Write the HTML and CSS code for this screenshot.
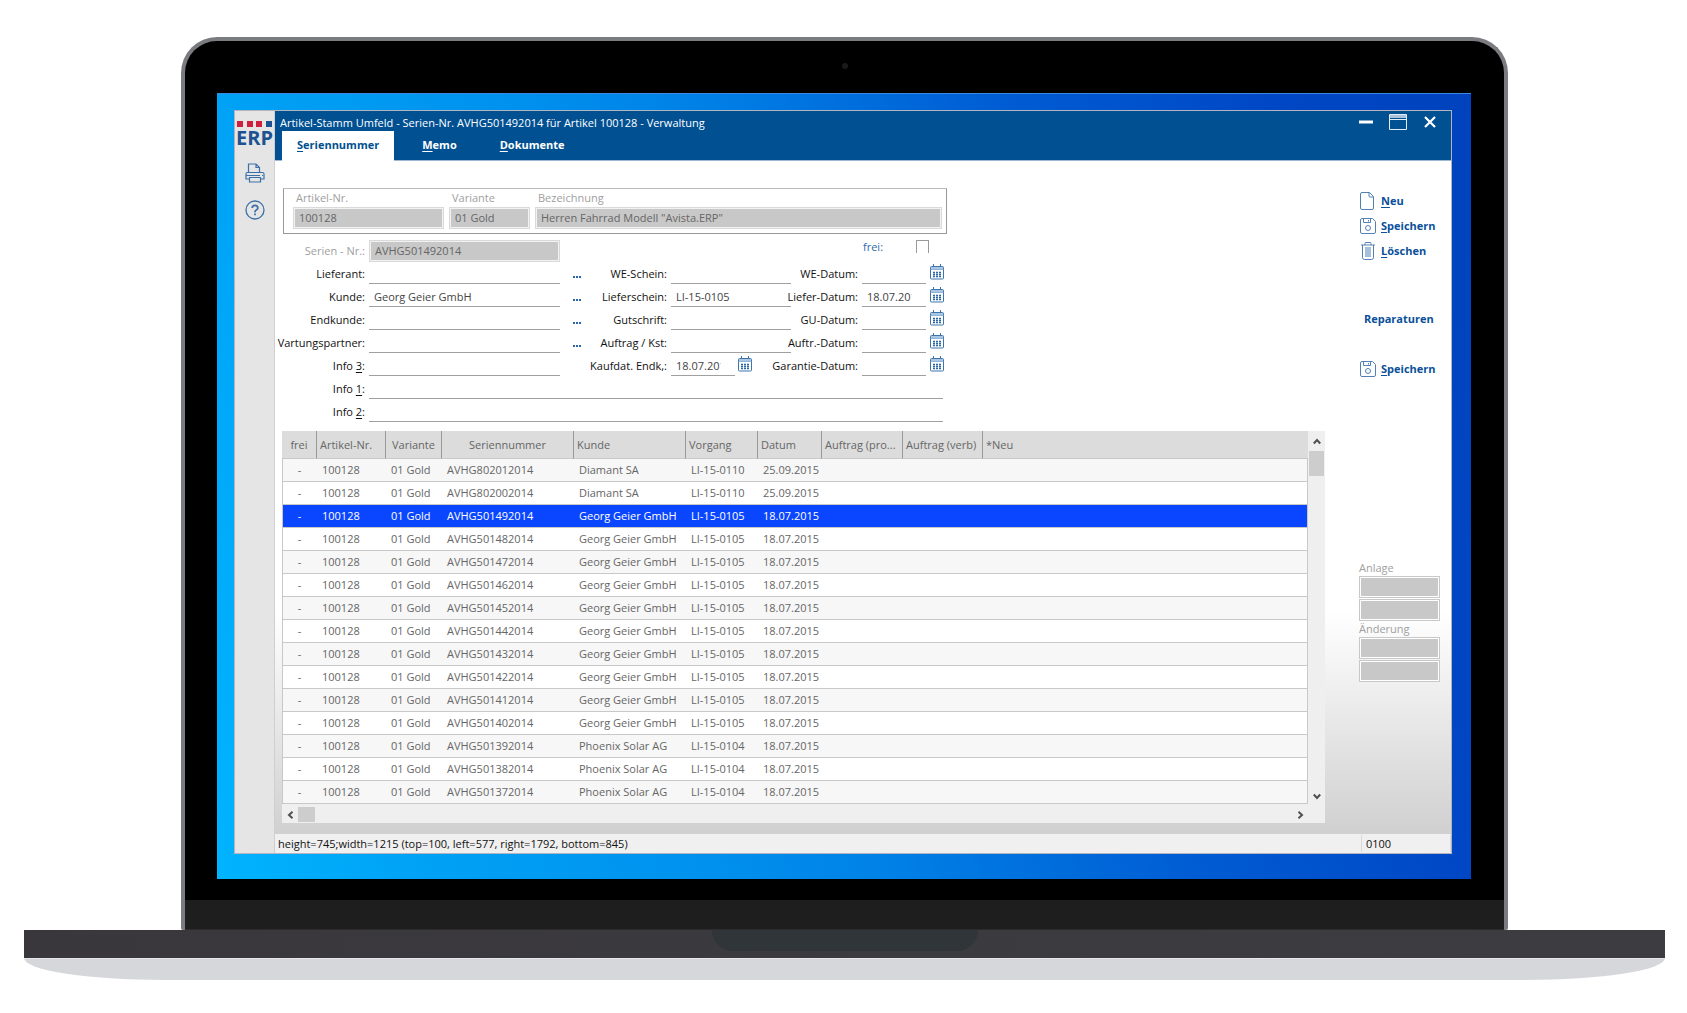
FILE: index.html
```html
<!DOCTYPE html>
<html lang="de">
<head>
<meta charset="utf-8">
<title>Artikel-Stamm Umfeld - Verwaltung</title>
<link rel="stylesheet" href="styles.css">
</head>
<body>
<svg class="defs" aria-hidden="true">
  <symbol id="cal" viewBox="0 0 14 16">
    <path d="M.5 3.500q0-1 1-1h11q1 0 1 1v10.500q0 1-1 1h-11q-1 0-1-1z" fill="#fff" stroke="#3f74ab"/>
    <path d="M1 3h12v2.500H1z" fill="#a9c6e3"/>
    <path d="M.5 5.500h13" stroke="#8fb2d6" fill="none"/>
    <path d="M3.500 0v3M10.500 0v3" stroke="#3f74ab" fill="none"/>
    <path d="M3 8.500h2M6 8.500h2M9 8.500h2M3 10.500h2M6 10.500h2M9 10.500h2M3 12.500h2M6 12.500h2M9 12.500h2" stroke="#2a66a5" stroke-width="1.300" fill="none"/>
  </symbol>
  <symbol id="disk" viewBox="0 0 16 16">
    <path d="M2 .5h10.500l3 3v10.500q0 1.500-1.500 1.500H2Q.5 15.500.5 14V2Q.5.500 2 .5M3.500.5v4h7v-4M8.500 2v1.500" fill="none" stroke="#5380b3"/>
    <circle cx="8" cy="10" r="2.500" fill="none" stroke="#5380b3"/>
  </symbol>
</svg>
<div class="laptop">
  <div class="lid">
    <span class="camera"></span>
    <div class="screen">
      <div class="window">
        <aside class="sidebar">
          <div class="logo">
            <div class="dots"><i></i><i></i><i></i><i class="blue"></i></div>
            <b>ERP</b>
          </div>
          <button class="side-btn" aria-label="Drucken">
            <svg width="20" height="20" viewBox="0 0 20 20" fill="none" stroke="#3d70a9" stroke-width="1.200"><path d="M3.500 10V1H11l3.500 3.500V10M11 1v3.500h3.500M4 16H1V11q0-1.500 1.500-1.500h15Q19 9.500 19 11v5h-3M1 12.500h14M17 12.500h1M4 14.500h12M4.500 14.500V19h11v-4.500"/></svg>
          </button>
          <button class="side-btn" aria-label="Hilfe">
            <svg width="20" height="20" viewBox="0 0 20 20" fill="none" stroke="#3d70a9" stroke-width="1.300"><circle cx="10" cy="10" r="9"/><path d="M7.200 8q0-2.700 2.800-2.700T12.800 8q0 1.200-1.500 2T10 12.300M10 13.500v1.700" stroke-width="1.800"/></svg>
          </button>
        </aside>
        <div class="main">
          <header class="titlebar">
            <div class="title-left">
              <h1>Artikel-Stamm Umfeld - Serien-Nr. AVHG501492014 für Artikel 100128 - Verwaltung</h1>
              <nav class="tabs">
                <button class="tab active"><u>S</u>eriennummer</button>
                <button class="tab"><u>M</u>emo</button>
                <button class="tab"><u>D</u>okumente</button>
              </nav>
            </div>
            <div class="controls">
              <button aria-label="Minimieren"><svg width="18" height="16" viewBox="0 0 18 16"><path d="M2 8h14" stroke="#fff" stroke-width="3"/></svg></button>
              <button aria-label="Maximieren"><svg width="18" height="16" viewBox="0 0 18 16"><path d="M.5.5h17v15H.5z" fill="none" stroke="#e4ecf4"/><path d="M1 1h16v3H1z" fill="#a9c3dc"/><path d="M1 5.500h16" stroke="#e4ecf4"/></svg></button>
              <button aria-label="Schließen"><svg width="18" height="16" viewBox="0 0 18 16"><path d="M4 3l10 10M14 3L4 13" stroke="#fff" stroke-width="2.200"/></svg></button>
            </div>
          </header>
          <div class="content">
            <div class="work">
              <div class="article">
                <div><label for="art">Artikel-Nr.</label><input id="art" class="gray" value="100128" disabled></div>
                <div><label for="var">Variante</label><input id="var" class="gray" value="01 Gold" disabled></div>
                <div><label for="bez">Bezeichnung</label><input id="bez" class="gray" value='Herren Fahrrad Modell "Avista.ERP"' disabled></div>
              </div>
              <form class="form">
                <label class="a dim" for="snr">Serien - Nr.:</label><input id="snr" class="b gray" value="AVHG501492014" disabled>
                <label class="frei" for="frei">frei:</label><input id="frei" class="check" type="checkbox">

                <label class="a" for="lief">Lieferant:</label><input id="lief" class="b line"><button type="button" class="more" aria-label="Lieferant wählen"><i></i><i></i><i></i></button>
                <label class="d" for="we">WE-Schein:</label><input id="we" class="e line">
                <label class="f" for="wed">WE-Datum:</label><input id="wed" class="g line date"><button type="button" class="cal" aria-label="Kalender"><svg><use href="#cal"/></svg></button>

                <label class="a" for="kd">Kunde:</label><input id="kd" class="b line" value="Georg Geier GmbH"><button type="button" class="more" aria-label="Kunde wählen"><i></i><i></i><i></i></button>
                <label class="d" for="ls">Lieferschein:</label><input id="ls" class="e line" value="LI-15-0105">
                <label class="f" for="ld">Liefer-Datum:</label><input id="ld" class="g line date" value="18.07.2015"><button type="button" class="cal" aria-label="Kalender"><svg><use href="#cal"/></svg></button>

                <label class="a" for="ek">Endkunde:</label><input id="ek" class="b line"><button type="button" class="more" aria-label="Endkunde wählen"><i></i><i></i><i></i></button>
                <label class="d" for="gs">Gutschrift:</label><input id="gs" class="e line">
                <label class="f" for="gd">GU-Datum:</label><input id="gd" class="g line date"><button type="button" class="cal" aria-label="Kalender"><svg><use href="#cal"/></svg></button>

                <label class="a" for="wp">Vartungspartner:</label><input id="wp" class="b line"><button type="button" class="more" aria-label="Partner wählen"><i></i><i></i><i></i></button>
                <label class="d" for="ak">Auftrag / Kst:</label><input id="ak" class="e line">
                <label class="f" for="ad">Auftr.-Datum:</label><input id="ad" class="g line date"><button type="button" class="cal" aria-label="Kalender"><svg><use href="#cal"/></svg></button>

                <label class="a" for="i3">Info <u>3</u>:</label><input id="i3" class="b line">
                <label class="d" for="ke">Kaufdat. Endk,:</label>
                <div class="e pair"><input id="ke" class="line date" value="18.07.2015"><button type="button" class="cal" aria-label="Kalender"><svg><use href="#cal"/></svg></button></div>
                <label class="f" for="ga">Garantie-Datum:</label><input id="ga" class="g line date"><button type="button" class="cal" aria-label="Kalender"><svg><use href="#cal"/></svg></button>

                <label class="a" for="i1">Info <u>1</u>:</label><input id="i1" class="wide line">
                <label class="a" for="i2">Info <u>2</u>:</label><input id="i2" class="wide line">
              </form>
              <div class="grid-area">
                <div class="grid-row">
                  <table>
                    <colgroup><col class="c1"><col class="c2"><col class="c3"><col class="c4"><col class="c5"><col class="c6"><col class="c7"><col class="c8"><col class="c9"><col></colgroup>
                    <thead><tr><th>frei</th><th>Artikel-Nr.</th><th>Variante</th><th>Seriennummer</th><th>Kunde</th><th>Vorgang</th><th>Datum</th><th>Auftrag (pro...</th><th>Auftrag (verb)</th><th>*Neu</th></tr></thead>
                    <tbody>
                      <tr><td>-</td><td>100128</td><td>01 Gold</td><td>AVHG802012014</td><td>Diamant SA</td><td>LI-15-0110</td><td>25.09.2015</td><td></td><td></td><td></td></tr>
                      <tr><td>-</td><td>100128</td><td>01 Gold</td><td>AVHG802002014</td><td>Diamant SA</td><td>LI-15-0110</td><td>25.09.2015</td><td></td><td></td><td></td></tr>
                      <tr class="selected"><td>-</td><td>100128</td><td>01 Gold</td><td>AVHG501492014</td><td>Georg Geier GmbH</td><td>LI-15-0105</td><td>18.07.2015</td><td></td><td></td><td></td></tr>
                      <tr><td>-</td><td>100128</td><td>01 Gold</td><td>AVHG501482014</td><td>Georg Geier GmbH</td><td>LI-15-0105</td><td>18.07.2015</td><td></td><td></td><td></td></tr>
                      <tr><td>-</td><td>100128</td><td>01 Gold</td><td>AVHG501472014</td><td>Georg Geier GmbH</td><td>LI-15-0105</td><td>18.07.2015</td><td></td><td></td><td></td></tr>
                      <tr><td>-</td><td>100128</td><td>01 Gold</td><td>AVHG501462014</td><td>Georg Geier GmbH</td><td>LI-15-0105</td><td>18.07.2015</td><td></td><td></td><td></td></tr>
                      <tr><td>-</td><td>100128</td><td>01 Gold</td><td>AVHG501452014</td><td>Georg Geier GmbH</td><td>LI-15-0105</td><td>18.07.2015</td><td></td><td></td><td></td></tr>
                      <tr><td>-</td><td>100128</td><td>01 Gold</td><td>AVHG501442014</td><td>Georg Geier GmbH</td><td>LI-15-0105</td><td>18.07.2015</td><td></td><td></td><td></td></tr>
                      <tr><td>-</td><td>100128</td><td>01 Gold</td><td>AVHG501432014</td><td>Georg Geier GmbH</td><td>LI-15-0105</td><td>18.07.2015</td><td></td><td></td><td></td></tr>
                      <tr><td>-</td><td>100128</td><td>01 Gold</td><td>AVHG501422014</td><td>Georg Geier GmbH</td><td>LI-15-0105</td><td>18.07.2015</td><td></td><td></td><td></td></tr>
                      <tr><td>-</td><td>100128</td><td>01 Gold</td><td>AVHG501412014</td><td>Georg Geier GmbH</td><td>LI-15-0105</td><td>18.07.2015</td><td></td><td></td><td></td></tr>
                      <tr><td>-</td><td>100128</td><td>01 Gold</td><td>AVHG501402014</td><td>Georg Geier GmbH</td><td>LI-15-0105</td><td>18.07.2015</td><td></td><td></td><td></td></tr>
                      <tr><td>-</td><td>100128</td><td>01 Gold</td><td>AVHG501392014</td><td>Phoenix Solar AG</td><td>LI-15-0104</td><td>18.07.2015</td><td></td><td></td><td></td></tr>
                      <tr><td>-</td><td>100128</td><td>01 Gold</td><td>AVHG501382014</td><td>Phoenix Solar AG</td><td>LI-15-0104</td><td>18.07.2015</td><td></td><td></td><td></td></tr>
                      <tr><td>-</td><td>100128</td><td>01 Gold</td><td>AVHG501372014</td><td>Phoenix Solar AG</td><td>LI-15-0104</td><td>18.07.2015</td><td></td><td></td><td></td></tr>
                    </tbody>
                  </table>
                  <div class="vbar">
                    <button aria-label="Nach oben"><svg width="8" height="7" viewBox="0 0 8 7"><path d="M.8 5.500L4 2l3.200 3.500" fill="none" stroke="#505050" stroke-width="2"/></svg></button>
                    <span class="thumb"></span>
                    <button class="end" aria-label="Nach unten"><svg width="8" height="7" viewBox="0 0 8 7"><path d="M.8 1.500L4 5l3.200-3.500" fill="none" stroke="#505050" stroke-width="2"/></svg></button>
                  </div>
                </div>
                <div class="hbar">
                  <button aria-label="Nach links"><svg width="7" height="8" viewBox="0 0 7 8"><path d="M5.500.8L2 4l3.500 3.200" fill="none" stroke="#505050" stroke-width="2"/></svg></button>
                  <span class="thumb"></span>
                  <button class="end" aria-label="Nach rechts"><svg width="7" height="8" viewBox="0 0 7 8"><path d="M1.500.8L5 4 1.500 7.200" fill="none" stroke="#505050" stroke-width="2"/></svg></button>
                </div>
              </div>
            </div>
            <aside class="actions">
              <div class="group">
                <button class="act"><svg class="tall" viewBox="0 0 16 18"><path d="M.5 2Q.5.500 2 .5h7.500l4 4V16q0 1.500-1.500 1.500H2Q.5 17.500.5 16zM9 .5v3.500q0 1 1 1h3.500" fill="none" stroke="#5380b3"/></svg><span><u>N</u>eu</span></button>
                <button class="act"><svg><use href="#disk"/></svg><span><u>S</u>peichern</span></button>
                <button class="act"><svg class="tall" viewBox="0 0 16 18" fill="none" stroke="#5380b3"><path d="M1 3h14M5 3V1.500Q5 .5 6 .5h4q1 0 1 1V3M2.500 3v12.500q0 2 2 2h7q2 0 2-2V3M6 5v10M8 5v10M10 5v10"/></svg><span><u>L</u>öschen</span></button>
              </div>
              <button class="act plain">Reparaturen</button>
              <button class="act"><svg><use href="#disk"/></svg><span><u>S</u>peichern</span></button>
              <div class="audit">
                <label for="an1">Anlage</label>
                <input id="an1" class="gray" disabled><input class="gray" disabled aria-label="Anlage Benutzer">
                <label for="ae1">Änderung</label>
                <input id="ae1" class="gray" disabled><input class="gray" disabled aria-label="Änderung Benutzer">
              </div>
            </aside>
          </div>
          <footer class="status"><span class="info">height=745;width=1215 (top=100, left=577, right=1792, bottom=845)</span><span class="code">0100</span></footer>
        </div>
      </div>
    </div>
    <div class="chin"></div>
  </div>
  <div class="base"><div class="notch"></div></div>
  <div class="foot"></div>
</div>
</body>
</html>
```
FILE: styles.css
```css
* { box-sizing: border-box; }
body { margin: 0; background: #fff; font: 11px/16px "Open Sans", "Noto Sans", sans-serif; color: #111; }
button, input { font: inherit; color: inherit; margin: 0; padding: 0; border: 0; background: none; border-radius: 0; }
button { cursor: pointer; }
svg { display: block; }
u { text-underline-offset: 2px; }
.defs { width: 0; height: 0; position: absolute; }

/* Device */
.laptop { padding: 37px 22px 0 24px; }
.lid { margin: 0 157px; border: 4px solid #7b7c80; border-bottom: 0; border-radius: 36px 36px 2px 2px; background: #000; display: flex; flex-direction: column; }
.camera { align-self: center; width: 6px; height: 6px; margin: 22px 0 24px; border-radius: 50%; background: #1a1a1c; }
.screen { margin: 0 33px 21px 32px; padding: 16px 19px 25px 17px; border-top: 1px solid #3a8ae0; background: linear-gradient(76deg, #00b4ff 0%, #00a2f5 14%, #0092ee 33%, #0080e6 47%, #005dd4 67%, #0047c5 86%, #0042bd 100%); }
.chin { height: 30px; background: #1e1e1e; border-bottom: 1px solid #2c2b2e; }
.base { height: 28px; background: linear-gradient(90deg, #39373c, #3d3d41); display: flex; justify-content: center; }
.notch { width: 266px; height: 21px; background: #2f3539; border-radius: 0 0 21px 21px; }
.foot { height: 22px; background: #d6d7db; border-top: 1px solid #e6e6ea; border-radius: 0 0 140px 140px / 0 0 22px 22px; }

/* Window */
.window { display: flex; border: 1px solid #b4b4bf; background: #fff; }
.sidebar { flex: none; width: 40px; background: #e5e5e5; border-right: 1px solid #cfcfcf; display: flex; flex-direction: column; align-items: center; }
.logo { margin: 10px 0 3px; color: #1d5291; }
.logo b { display: block; font: 700 20px/22px "Open Sans", sans-serif; }
.dots { display: flex; justify-content: space-between; padding: 0 1px; }
.dots i { width: 6px; height: 6px; background: #d01f3c; }
.dots .blue { background: #1d5291; }
.side-btn { margin: 11px 0 6px; }
.main { flex: 1; min-width: 0; display: flex; flex-direction: column; }
.titlebar { height: 50px; background: #005092; border-bottom: 1px solid #9db8d2; color: #fff; display: flex; justify-content: space-between; }
.title-left { display: flex; flex-direction: column; padding-left: 5px; }
h1 { margin: 4px 0 0; font-size: 11px; font-weight: 400; line-height: 16px; white-space: nowrap; }
.tabs { display: flex; gap: 13px; padding-left: 2px; }
.tab { height: 30px; padding: 0 15px 2px; font-weight: 700; }
.active { background: #fff; color: #005092; }
.controls { display: flex; align-items: flex-start; gap: 14px; padding: 3px 12px 0 0; }

.content { flex: 1; display: flex; background: linear-gradient(#fff 67%, #d0d0d0 100%); }
.work { flex: 1; min-width: 0; padding: 27px 0 11px; }
.article { width: 664px; height: 46px; margin-left: 8px; padding: 1px 4px 0 9px; border: 1px solid #999; border-top-color: #bbb; background: #fff; display: grid; grid-template-columns: 151px 81px 1fr; gap: 5px; color: #a0a0a0; }
.article label { display: block; padding: 0 0 1px 3px; }
.article input { width: 100%; }
.gray { height: 22px; background: #c8c8c8; border: 1px solid #d9d9d9; box-shadow: inset 0 0 0 1px #f2f2f2; padding: 0 5px 1px; color: #666; }

.form { display: grid; grid-template-columns: 90px 191px 28px 71px 120px 63px 64px 13px; grid-auto-rows: 23px; column-gap: 4px; align-items: center; margin-top: 5px; }
.form label { white-space: nowrap; justify-self: end; }
.form input { width: 100%; min-width: 0; }
.a { grid-column: 1; }
.b { grid-column: 2; }
.more { grid-column: 3; display: flex; gap: 1px; padding: 7px 9px 0; }
.more i { width: 2px; height: 2px; background: #2a66a5; }
.d { grid-column: 4; }
.e { grid-column: 5; }
.f { grid-column: 6; }
.g { grid-column: 7; }
.wide { grid-column: 2 / -1; }
.line { height: 21px; border-bottom: 1px solid #a0a0a0; padding: 0 5px; color: #444; }
.form .date { width: 64px; padding-right: 14px; }
.pair { display: flex; gap: 3px; align-items: center; }
.cal svg { width: 14px; height: 16px; margin-bottom: 3px; }
.form .dim { color: #a0a0a0; }
.form .frei { grid-column: 7; justify-self: start; color: #2f6aa8; padding: 0 1px 8px; }
.form .check { grid-column: 7 / -1; justify-self: end; appearance: none; width: 13px; height: 13px; margin: 0 14px 8px 0; border: 1px solid #999; border-bottom: 0; }
.form .frei, .form .check { grid-row: 1; }

/* Serial number list */
.grid-area { margin: 8px 0 0 7px; background: #efefef; }
.grid-row { display: flex; padding-bottom: 2px; }
table { flex: 1; min-width: 0; border-collapse: separate; border-spacing: 0; table-layout: fixed; color: #666; background: #fff; }
.c1 { width: 34px; } .c2 { width: 69px; } .c3 { width: 56px; } .c4 { width: 132px; } .c5 { width: 112px; }
.c6 { width: 72px; } .c7 { width: 64px; } .c8 { width: 81px; } .c9 { width: 80px; }
th, td { font-weight: 400; text-align: left; white-space: nowrap; overflow: hidden; padding: 0 0 0 6px; border-bottom: 1px solid #c8c8c8; }
th { height: 28px; background: #dcdcdc; padding-left: 3px; border-left: 1px solid #999; }
th:first-child { border-left: 0; }
th:nth-child(1), th:nth-child(3), th:nth-child(4), td:nth-child(1) { text-align: center; padding: 0; }
td { height: 23px; }
td:first-child { border-left: 1px solid #c8c8c8; }
td:last-child { border-right: 1px solid #c8c8c8; }
tbody tr:nth-child(odd) { background: #f7f7f7; }
tbody tr.selected { background: #0a46ff; color: #fff; }
.vbar { width: 17px; display: flex; flex-direction: column; align-items: center; padding: 0 1px; }
.vbar button { height: 20px; display: flex; align-items: center; }
.vbar .thumb { width: 15px; height: 25px; background: #cdcdcd; }
.hbar { height: 17px; display: flex; align-items: center; padding-right: 17px; }
.hbar button { width: 16px; display: flex; justify-content: center; }
.hbar .thumb { width: 17px; height: 15px; background: #cdcdcd; }
.vbar .end { margin-top: auto; height: 16px; }
.hbar .end { margin-left: auto; }

/* Actions */
.actions { flex: none; width: 126px; padding: 27px 11px 0 34px; display: flex; flex-direction: column; align-items: flex-start; }
.group { display: flex; flex-direction: column; align-items: flex-start; }
.act { height: 25px; display: flex; align-items: center; gap: 5px; padding-left: 1px; font-weight: 700; color: #0a509a; }
.act svg { width: 16px; height: 16px; }
.act .tall { height: 18px; }
.plain { margin: 43px 0 25px; padding-left: 5px; }
.audit { margin-top: 180px; width: 81px; display: flex; flex-direction: column; gap: 1px; color: #a0a0a0; }
.audit label { height: 14px; line-height: 14px; }
.audit .gray { width: 100%; border-color: #c8c8c8; box-shadow: inset 0 0 0 1px #fff; }

.status { height: 19px; background: #f0f0f0; display: flex; color: #111; }
.info { flex: 1; padding: 2px 0 0 3px; }
.code { width: 90px; margin: 1px 0; border-left: 1px solid #d9d9d9; border-right: 1px solid #d9d9d9; padding: 1px 0 0 4px; }
```
